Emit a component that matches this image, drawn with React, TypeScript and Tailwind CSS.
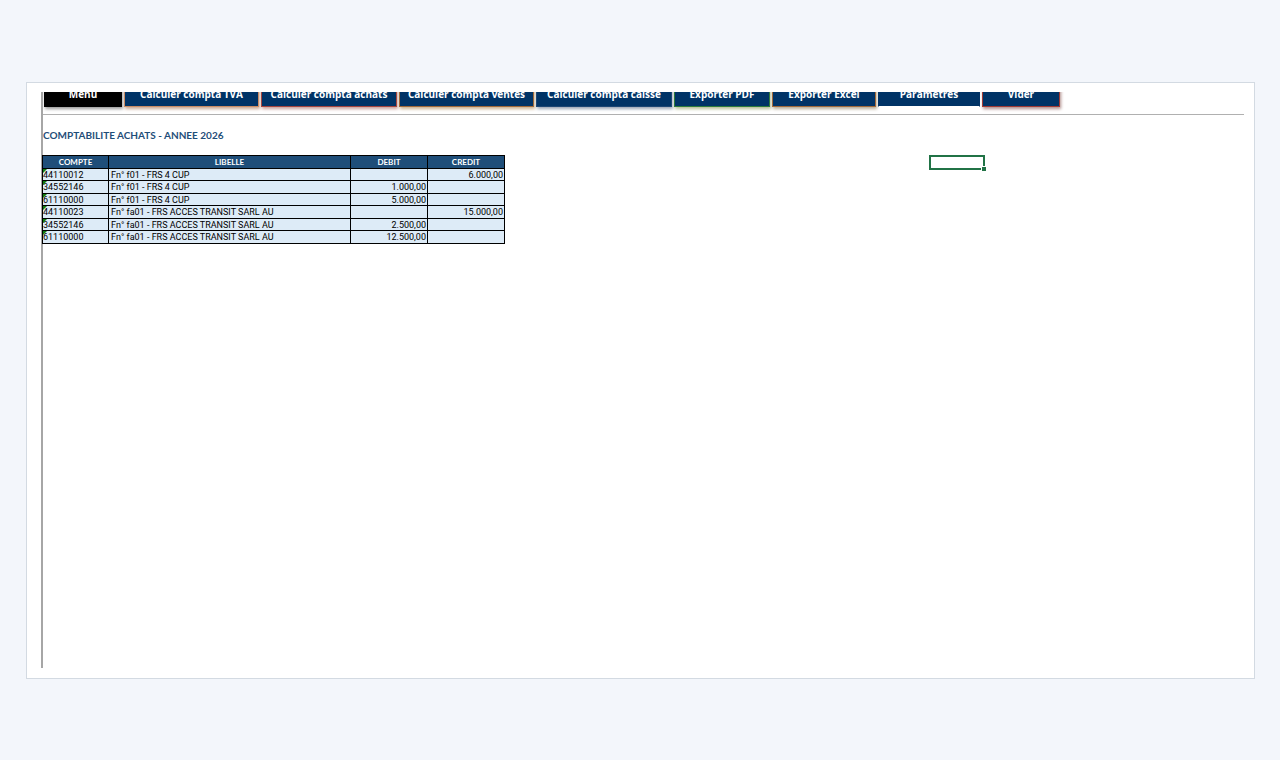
import React from "react";
import clsx from "clsx";

interface ToolbarButton {
  label: string;
  className: string;
}

interface Entry {
  compte: string;
  libelle: string;
  debit: string;
  credit: string;
}

const buttons: ToolbarButton[] = [
  { label: "Menu", className: "w-[78px] bg-black border-black shadow-[1px_2px_3px_#9a9a9a]" },
  { label: "Calculer compta TVA", className: "w-[135px] bg-[#003366] border-[#c98b63] shadow-[1px_2px_3px_#c9a892]" },
  { label: "Calculer compta achats", className: "w-[136px] bg-[#003366] border-[#a5453f] shadow-[1px_2px_3px_#c9a09a]" },
  { label: "Calculer compta ventes", className: "w-[135px] bg-[#003366] border-[#a0693a] shadow-[1px_2px_3px_#c9b08f]" },
  { label: "Calculer compta caisse", className: "w-[136px] bg-[#003366] border-[#1c4674] shadow-[1px_2px_3px_#9aa5b5]" },
  { label: "Exporter PDF", className: "w-[96px] bg-[#003366] border-[#2d7a3c] shadow-[1px_2px_3px_#b5bd94]" },
  { label: "Exporter Excel", className: "w-[104px] bg-[#003366] border-[#a0693a] shadow-[1px_2px_3px_#b5aa94]" },
  { label: "Paramètres", className: "w-[102px] bg-[#003366] border-[#003366] border-b-white" },
  { label: "Vider", className: "w-[78px] bg-[#003366] border-[#a03a35] shadow-[1px_2px_3px_#b08f8c]" },
];

const entries: Entry[] = [
  { compte: "44110012", libelle: "Fn° f01 - FRS 4 CUP", debit: "", credit: "6.000,00" },
  { compte: "34552146", libelle: "Fn° f01 - FRS 4 CUP", debit: "1.000,00", credit: "" },
  { compte: "61110000", libelle: "Fn° f01 - FRS 4 CUP", debit: "5.000,00", credit: "" },
  { compte: "44110023", libelle: "Fn° fa01 - FRS ACCES TRANSIT SARL AU", debit: "", credit: "15.000,00" },
  { compte: "34552146", libelle: "Fn° fa01 - FRS ACCES TRANSIT SARL AU", debit: "2.500,00", credit: "" },
  { compte: "61110000", libelle: "Fn° fa01 - FRS ACCES TRANSIT SARL AU", debit: "12.500,00", credit: "" },
];

const Toolbar: React.FC = () => (
  <div className="flex h-[23px] items-end gap-0.5 overflow-hidden border-b border-[#b0b0b0] pb-[7px] pl-px">
    {buttons.map((button) => (
      <button
        key={button.label}
        type="button"
        className={clsx(
          "h-[26px] shrink-0 border text-center font-['Open_Sans',sans-serif] text-[10px] leading-[22px] font-bold whitespace-nowrap text-white",
          button.className,
        )}
      >
        {button.label}
      </button>
    ))}
  </div>
);

const EntriesTable: React.FC = () => (
  <table className="-ml-px h-[89px] w-[462px] shrink-0 table-fixed border-collapse text-[9px] leading-[10px] text-black">
    <colgroup>
      <col className="w-[66px]" />
      <col className="w-[242px]" />
      <col className="w-[77px]" />
      <col className="w-[77px]" />
    </colgroup>
    <thead>
      <tr className="h-[13px] bg-[#1f4e79] text-[8px] text-white">
        {["COMPTE", "LIBELLE", "DEBIT", "CREDIT"].map((title) => (
          <th key={title} scope="col" className="border border-black p-0 pt-px text-center font-bold">
            {title}
          </th>
        ))}
      </tr>
    </thead>
    <tbody className="font-['Liberation_Sans_Narrow',Roboto,sans-serif]">
      {entries.map((entry, index) => (
        <tr key={index} className="bg-[#ddebf7]">
          <td className="relative border border-black p-0 pt-px">
            {/* number stored as text marker */}
            <svg className="absolute top-0 left-0 size-1" viewBox="0 0 4 4" aria-hidden="true">
              <path d="M0 0h4L0 4z" fill="#107c10" />
            </svg>
            {entry.compte}
          </td>
          <td className="border border-black p-0 pt-px pl-0.5 whitespace-nowrap">{entry.libelle}</td>
          <td className="border border-black p-0 pt-px pr-px text-right">{entry.debit}</td>
          <td className="border border-black p-0 pt-px pr-px text-right">{entry.credit}</td>
        </tr>
      ))}
    </tbody>
  </table>
);

export default function App() {
  return (
    <div className="flex min-h-screen flex-col justify-center bg-[#f3f6fb] pr-[25px] pl-[26px] font-[Lato,'Open_Sans',sans-serif]">
      <main className="border border-[#d3dae2] bg-white pt-[9px] pr-[10px] pb-[10px] pl-[14px]">
        <div className="min-h-[576px] border-l-2 border-[#a6a6a6]">
          <Toolbar />
          <h1 className="mt-3 text-[10px] leading-[17px] font-bold text-[#1f4e79]">
            COMPTABILITE ACHATS - ANNEE 2026
          </h1>
          <div className="mt-[11px] flex items-start">
            <EntriesTable />
            <div className="relative ml-[424px] h-[15px] w-14 shrink-0 border-2 border-[#217346]">
              <span className="absolute -right-[3px] -bottom-[3px] size-[5px] border-t border-l border-white bg-[#217346]" />
            </div>
          </div>
        </div>
      </main>
    </div>
  );
}
